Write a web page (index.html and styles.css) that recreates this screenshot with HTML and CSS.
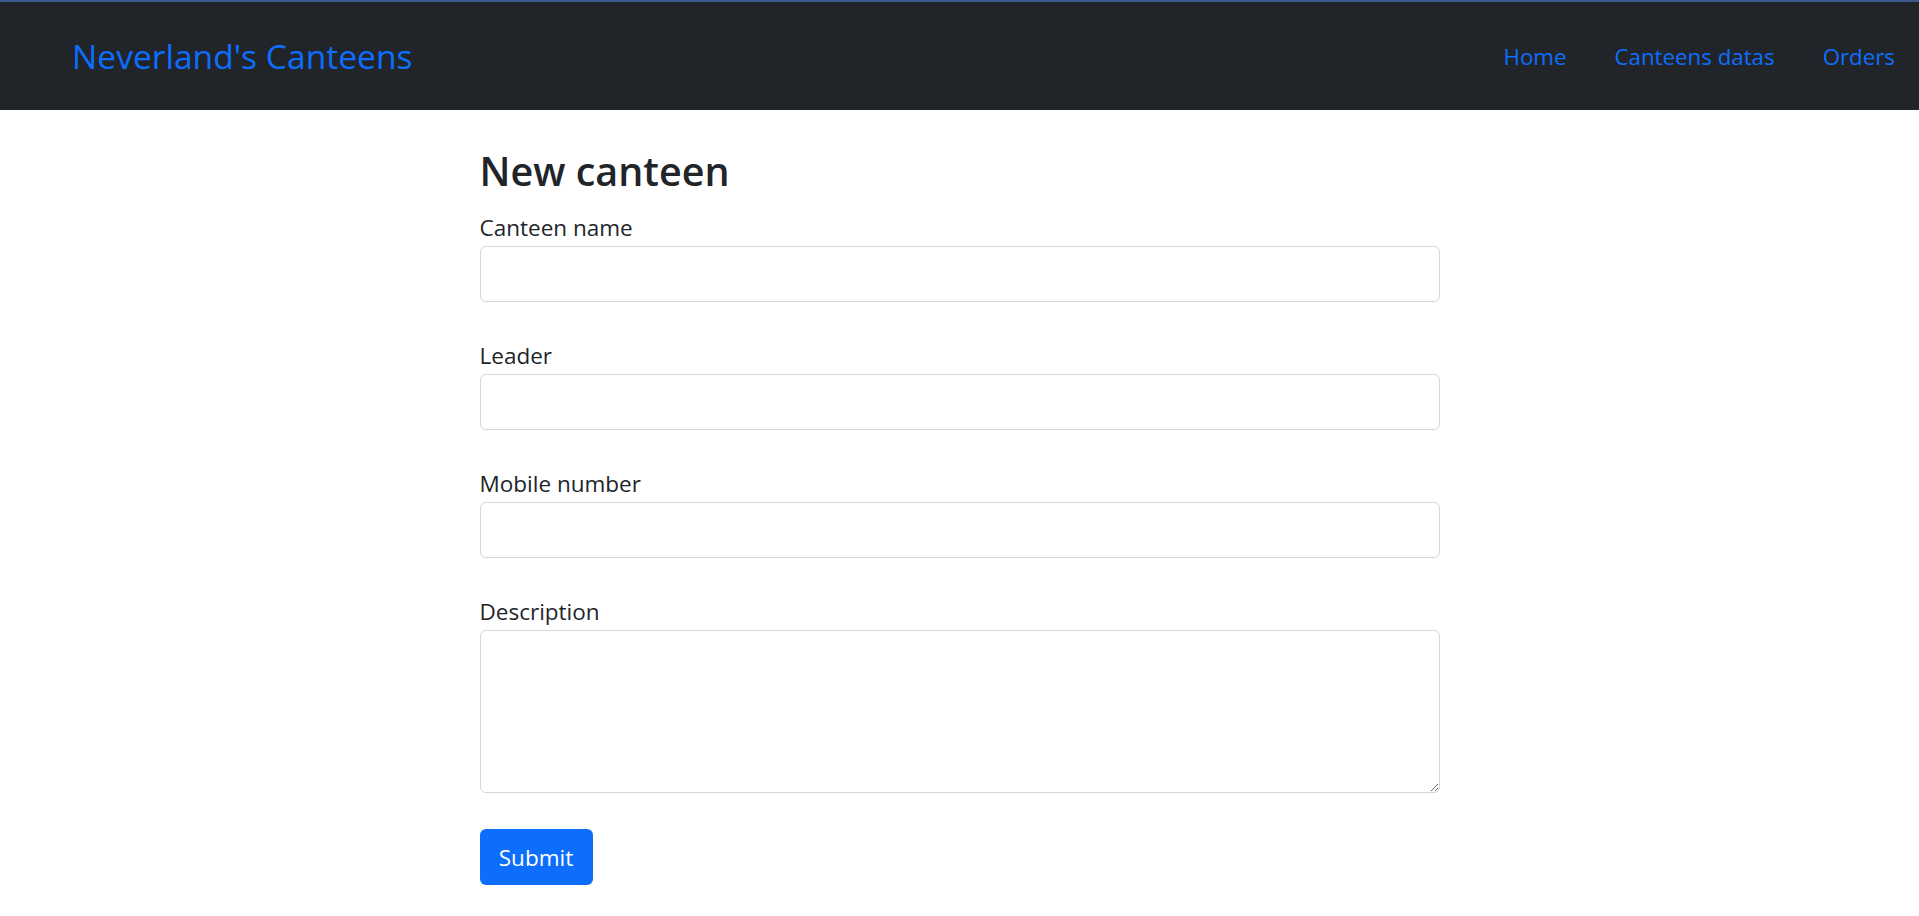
FILE: index.html
```html
<!DOCTYPE html>
<html lang="en">
<head>
<meta charset="utf-8">
<title>Neverland's Canteens</title>
<link rel="stylesheet" href="styles.css">
</head>
<body>
<nav class="topbar">
  <a class="brand" href="#">Neverland's Canteens</a>
  <div class="nav-links">
    <a href="#">Home</a>
    <a href="#">Canteens datas</a>
    <a href="#">Orders</a>
  </div>
</nav>
<main class="page">
  <h1 class="title">New canteen</h1>
  <form class="form">
    <div class="field">
      <label class="label" for="name">Canteen name</label>
      <input class="control" id="name" type="text">
    </div>
    <div class="field">
      <label class="label" for="leader">Leader</label>
      <input class="control" id="leader" type="text">
    </div>
    <div class="field">
      <label class="label" for="mobile">Mobile number</label>
      <input class="control" id="mobile" type="text">
    </div>
    <div class="field">
      <label class="label" for="desc">Description</label>
      <textarea class="control area" id="desc"></textarea>
    </div>
    <button class="btn" type="button">Submit</button>
  </form>
</main>
</body>
</html>
```
FILE: styles.css
```css
* { box-sizing: border-box; }
body {
  margin: 0;
  font-family: "Open Sans", "Noto Sans", sans-serif;
  color: #212529;
  background: #fff;
}
.topbar {
  border-top: 2px solid #3b5a8c;
  background: #212529;
  height: 110px;
  display: flex;
  align-items: center;
  justify-content: space-between;
  padding: 0 24px 0 72px;
}
.topbar a { text-decoration: none; color: #0d6efd; }
.brand { font-size: 33.6px; }
.nav-links { display: flex; gap: 48px; font-size: 22.3px; }
.page {
  width: 960px;
  margin: 0 auto;
  padding-top: 35px;
}
.title {
  margin: 0 0 12px;
  font-size: 39.5px;
  line-height: 53px;
  font-weight: 600;
}
.field { margin-bottom: 36px; }
.label {
  display: block;
  font-size: 22.5px;
  line-height: 36px;
}
.control {
  display: block;
  width: 100%;
  height: 56px;
  border: 1px solid #d4d7db;
  border-radius: 6px;
  font: inherit;
  background: #fff;
}
.area { height: 163px; resize: vertical; }
.btn {
  width: 113px;
  height: 56px;
  border: 0;
  border-radius: 6px;
  background: #0d6efd;
  color: #fff;
  font-family: inherit;
  font-size: 22.5px;
  padding: 0;
}
```
